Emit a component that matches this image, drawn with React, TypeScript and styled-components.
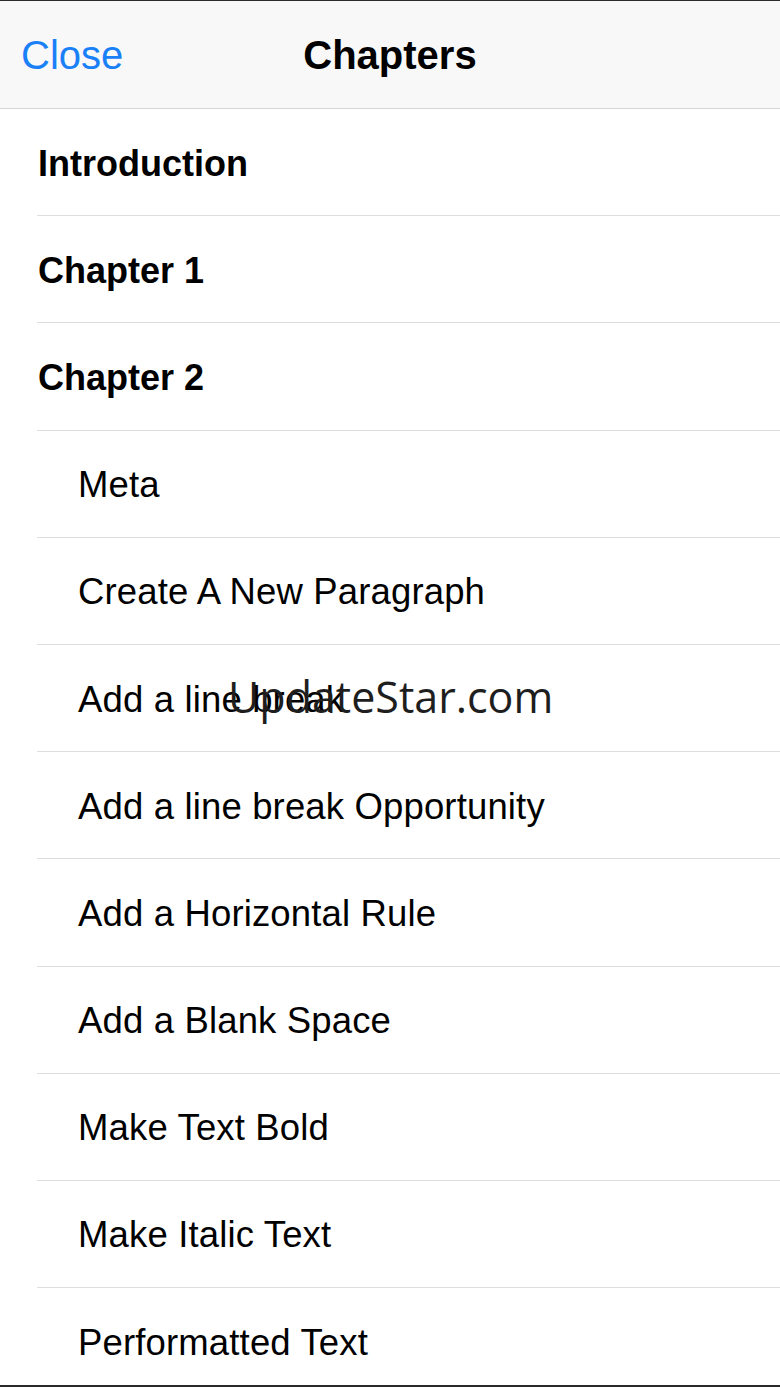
import React from "react";
import styled, { createGlobalStyle } from "styled-components";

const Global = createGlobalStyle`
  html, body { margin: 0; padding: 0; background: #ffffff; }
  body { font-family: "Liberation Sans", Arial, sans-serif; }
`;

const Screen = styled.div`
  position: relative;
  width: 780px;
  height: 1387px;
  box-sizing: border-box;
  border-top: 1px solid #2a2a2a;
  border-bottom: 2px solid #2a2a2a;
  overflow: hidden;
  background: #ffffff;
  display: flex;
  flex-direction: column;
`;

const NavBar = styled.header`
  flex: 0 0 auto;
  height: 108px;
  box-sizing: border-box;
  background: #f8f8f8;
  border-bottom: 1px solid #d6d6d6;
  display: grid;
  grid-template-columns: 1fr auto 1fr;
  align-items: center;
  padding: 2px 21px 0;
`;

const NavButton = styled.span`
  font-size: 40px;
  color: #1a80f8;
  justify-self: start;
`;

const NavTitle = styled.h1`
  margin: 0;
  font-size: 40px;
  font-weight: 700;
  color: #000;
`;

const List = styled.ul`
  list-style: none;
  margin: 0;
  padding: 0 0 0 37px;
`;

const Row = styled.li<{ $indent: boolean; $bold: boolean }>`
  box-sizing: content-box;
  height: 103.2px;
  padding-top: 3px;
  border-bottom: 1px solid #dedede;
  display: flex;
  align-items: center;
  padding-left: ${(p) => (p.$indent ? "41px" : "1px")};
  font-size: ${(p) => (p.$bold ? "36px" : "36.5px")};
  letter-spacing: ${(p) => (p.$bold ? "0" : "0.15px")};
  font-weight: ${(p) => (p.$bold ? 700 : 400)};
  color: #000;
`;

const Watermark = styled.div`
  position: absolute;
  left: 228px;
  top: 666px;
  font-family: "Open Sans", "Noto Sans", sans-serif;
  font-size: 43px;
  color: #1e1e1e;
  pointer-events: none;
  white-space: nowrap;
`;

const items: { label: string; bold: boolean; indent: boolean }[] = [
  { label: "Introduction", bold: true, indent: false },
  { label: "Chapter 1", bold: true, indent: false },
  { label: "Chapter 2", bold: true, indent: false },
  { label: "Meta", bold: false, indent: true },
  { label: "Create A New Paragraph", bold: false, indent: true },
  { label: "Add a line break", bold: false, indent: true },
  { label: "Add a line break Opportunity", bold: false, indent: true },
  { label: "Add a Horizontal Rule", bold: false, indent: true },
  { label: "Add a Blank Space", bold: false, indent: true },
  { label: "Make Text Bold", bold: false, indent: true },
  { label: "Make Italic Text", bold: false, indent: true },
  { label: "Performatted Text", bold: false, indent: true },
];

export default function App() {
  return (
    <>
      <Global />
      <Screen>
        <NavBar>
          <NavButton>Close</NavButton>
          <NavTitle>Chapters</NavTitle>
          <span />
        </NavBar>
        <List>
          {items.map((it) => (
            <Row key={it.label} $bold={it.bold} $indent={it.indent}>
              {it.label}
            </Row>
          ))}
        </List>
        <Watermark>UpdateStar.com</Watermark>
      </Screen>
    </>
  );
}
